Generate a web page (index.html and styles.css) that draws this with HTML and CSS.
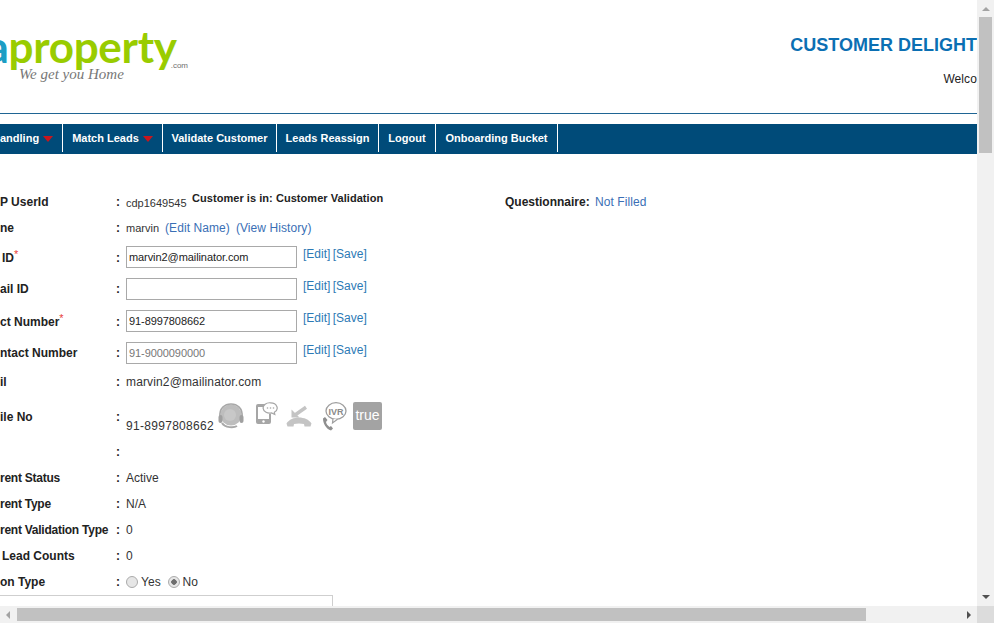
FILE: index.html
```html
<!DOCTYPE html>
<html lang="en">
<head>
<meta charset="utf-8">
<title>Customer Delight</title>
<link rel="stylesheet" href="styles.css">
</head>
<body>
<div class="window">
  <div class="main">
    <div class="viewport">
      <div class="page">
        <header class="header">
          <div class="logo">
            <div class="logo-word"><span class="logo-india">india</span><span class="logo-property">property</span><span class="logo-com">.com</span></div>
            <div class="logo-tag">We get you Home</div>
          </div>
          <div class="head-right">
            <div class="head-title">CUSTOMER DELIGHT</div>
            <div class="head-welcome">Welco</div>
          </div>
        </header>
        <div class="rule"></div>
        <nav class="nav">
          <a class="nav-item nav-first">andling<i class="caret"></i></a>
          <a class="nav-item nav-match">Match Leads<i class="caret"></i></a>
          <a class="nav-item nav-validate">Validate Customer</a>
          <a class="nav-item nav-reassign">Leads Reassign</a>
          <a class="nav-item nav-logout">Logout</a>
          <a class="nav-item nav-bucket">Onboarding Bucket</a>
        </nav>
        <section class="form">
          <div class="row r26">
            <div class="lbl">P UserId</div><div class="colon">:</div>
            <div class="val small"><span class="uid">cdp1649545</span><b class="state">Customer is in: Customer Validation</b><b class="q">Questionnaire:</b><a class="link">Not Filled</a></div>
          </div>
          <div class="row r26">
            <div class="lbl">ne</div><div class="colon">:</div>
            <div class="val"><span class="small">marvin</span><a class="link ml6">(Edit Name)</a><a class="link ml6">(View History)</a></div>
          </div>
          <div class="row r32 first-input">
            <div class="lbl ind2">ID<sup class="req">*</sup></div><div class="colon">:</div>
            <div class="val"><input class="field" type="text" value="marvin2@mailinator.com"><span class="acts"><a class="link2">[Edit]</a> <a class="link2">[Save]</a></span></div>
          </div>
          <div class="row r32 up1">
            <div class="lbl">ail ID</div><div class="colon">:</div>
            <div class="val"><input class="field" type="text"><span class="acts"><a class="link2">[Edit]</a> <a class="link2">[Save]</a></span></div>
          </div>
          <div class="row r32">
            <div class="lbl">ct Number<sup class="req">*</sup></div><div class="colon">:</div>
            <div class="val"><input class="field" type="text" value="91-8997808662"><span class="acts"><a class="link2">[Edit]</a> <a class="link2">[Save]</a></span></div>
          </div>
          <div class="row r32 up1">
            <div class="lbl">ntact Number</div><div class="colon">:</div>
            <div class="val"><input class="field" type="text" placeholder="91-9000090000"><span class="acts"><a class="link2">[Edit]</a> <a class="link2">[Save]</a></span></div>
          </div>
          <div class="row r24">
            <div class="lbl">il</div><div class="colon">:</div>
            <div class="val spaced">marvin2@mailinator.com</div>
          </div>
          <div class="row rmobile">
            <div class="lbl">ile No</div><div class="colon">:</div>
            <div class="val mobile">
              <span class="mob-num">91-8997808662</span>
              <svg class="ico ico-head" viewBox="0 0 26 26" width="26" height="26">
                <circle cx="13" cy="12" r="10.5" fill="#bdbdbd"/>
                <path d="M2 14C1 5 7 1 13 1s12 4 11 13" fill="none" stroke="#a8a8a8" stroke-width="1.6"/>
                <rect x="0.5" y="12" width="4" height="8" rx="2" fill="#a0a0a0"/>
                <rect x="21.5" y="12" width="4" height="8" rx="2" fill="#a0a0a0"/>
                <path d="M4 20c3 5 12 5 15 3" fill="none" stroke="#a8a8a8" stroke-width="2"/>
                <circle cx="12" cy="12" r="6" fill="#c8c8c8"/>
              </svg>
              <svg class="ico ico-sms" viewBox="0 0 23 24" width="23" height="24">
                <path d="M10 2H3a2 2 0 0 0-2 2v16a2 2 0 0 0 2 2h11a2 2 0 0 0 2-2V12h-2v5H3V5h7z" fill="#a6a6a6"/>
                <circle cx="8.500" cy="19.500" r="1.200" fill="#fff"/>
                <path d="M15.500 .8a6.500 5.200 0 0 1 3.800 9.500l.5 2.200-3.200-1.600a6.500 5.200 0 1 1-1.100-10.100z" fill="#fff" stroke="#a6a6a6" stroke-width="1.200"/>
                <circle cx="12.500" cy="6" r=".8" fill="#a6a6a6"/><circle cx="15.500" cy="6" r=".8" fill="#a6a6a6"/><circle cx="18.500" cy="6" r=".8" fill="#a6a6a6"/>
              </svg>
              <svg class="ico ico-miss" viewBox="0 0 26 22" width="26" height="22">
                <path d="M.5 18.500c5-8 20-8 25 0l-1 3h-6l-.5-2.500c-3-.7-7-.7-10 0l-.5 2.500h-6z" fill="#c4c4c4"/>
                <path d="M20 2.300L9 10" fill="none" stroke="#c4c4c4" stroke-width="3.500"/>
                <path d="M5.500 4.500v8h8z" fill="#c4c4c4"/>
              </svg>
              <svg class="ico ico-ivr" viewBox="0 0 27 30" width="27" height="30">
                <ellipse cx="14" cy="9" rx="10" ry="8.300" fill="#fff" stroke="#9e9e9e" stroke-width="1.300"/>
                <path d="M11 17l-.5 4 5-3.800" fill="#fff" stroke="#9e9e9e" stroke-width="1.200"/>
                <text class="ivr-text" x="14" y="12.500" text-anchor="middle">IVR</text>
                <path d="M3 15l2.500 3-1.500 2c.5 2 1.500 3.500 3.500 5l1.500-1 2 2.500-2 2c-5-1.500-8-7-8-12z" fill="#8f8f8f"/>
              </svg>
              <span class="true-badge">true</span>
            </div>
          </div>
          <div class="row r26">
            <div class="lbl"></div><div class="colon">:</div><div class="val"></div>
          </div>
          <div class="row r26">
            <div class="lbl tight">rent Status</div><div class="colon">:</div><div class="val">Active</div>
          </div>
          <div class="row r26">
            <div class="lbl tight">rent Type</div><div class="colon">:</div><div class="val">N/A</div>
          </div>
          <div class="row r26">
            <div class="lbl tight">rent Validation Type</div><div class="colon">:</div><div class="val">0</div>
          </div>
          <div class="row r26">
            <div class="lbl ind2">Lead Counts</div><div class="colon">:</div><div class="val">0</div>
          </div>
          <div class="row r26">
            <div class="lbl">on Type</div><div class="colon">:</div>
            <div class="val radios">
              <label class="radio-opt"><input type="radio" name="vt" disabled>Yes</label>
              <label class="radio-opt"><input type="radio" name="vt" checked disabled>No</label>
            </div>
          </div>
          <div class="box"></div>
        </section>
      </div>
    </div>
    <div class="bar-v">
      <span class="arr arr-up"></span>
      <span class="thumb-v"></span>
      <span class="arr arr-down"></span>
    </div>
  </div>
  <div class="bottom">
    <div class="bar-h">
      <span class="arr arr-left"></span>
      <span class="thumb-h"></span>
      <span class="arr arr-right"></span>
    </div>
    <div class="corner"></div>
  </div>
</div>
</body>
</html>
```
FILE: styles.css
```css
* { box-sizing: border-box; }
html, body { margin: 0; padding: 0; height: 100%; overflow: hidden; background: #fff; }
body { font: 12px "Liberation Sans", Arial, sans-serif; color: #222; }

.window { display: flex; flex-direction: column; width: 994px; height: 623px; }
.main { display: flex; height: 606px; }
.viewport { width: 977px; height: 606px; overflow: hidden; }
.page { width: 977px; }

.header { display: flex; justify-content: space-between; height: 113px; }
.logo { width: 188px; flex: none; padding-top: 24px; display: flex; flex-direction: column; align-items: flex-end; }
.logo-word { display: flex; align-items: baseline; white-space: nowrap; font-family: Lato, "Liberation Sans", sans-serif; font-weight: 700; font-size: 44px; line-height: 44px; letter-spacing: -0.3px; }
.logo-india { color: #1c9dc4; }
.logo-property { color: #99cc00; }
.logo-com { position: relative; top: 5px; color: #6f6f6f; font: 8px "Liberation Sans", sans-serif; letter-spacing: 0; margin-left: -6px; }
.logo-tag { align-self: flex-start; margin: -1px 0 0 19px; font: italic 15px/14px "Liberation Serif", serif; color: #777; white-space: nowrap; }
.head-right { text-align: right; white-space: nowrap; }
.head-title { margin-top: 35px; font-size: 18px; line-height: 21px; font-weight: 700; color: #0b6fb3; }
.head-welcome { margin-top: 16px; font-size: 12px; line-height: 14px; letter-spacing: .1px; color: #222; }

.rule { height: 1px; background: #1f6594; }
.nav { display: flex; height: 30px; margin-top: 10px; background: #004b79; }
.nav-item { height: 28px; font-size: 11px; font-weight: 700; color: #fff; border-right: 1px solid #fff; white-space: nowrap; display: flex; align-items: center; justify-content: center; }
.nav-first { width: 63px; justify-content: flex-start; }
.nav-match { width: 100px; }
.nav-validate { width: 114px; }
.nav-reassign { width: 102px; }
.nav-logout { width: 57px; }
.nav-bucket { width: 122px; }
.caret { width: 0; height: 0; margin: 2px 0 0 4px; border-left: 5.500px solid transparent; border-right: 5.500px solid transparent; border-top: 6px solid #c8161d; }

.form { padding-top: 35px; }
.row { display: grid; grid-template-columns: 116px 10px 1fr; align-items: center; }
.r26 { height: 26px; }
.r24 { height: 24px; }
.r32 { height: 32px; align-items: start; }
.first-input { margin-top: 1px; }
.lbl { font-weight: 700; color: #222; white-space: nowrap; }
.ind2 { padding-left: 2px; }
.tight { letter-spacing: -.25px; }
.r32 .lbl, .r32 .colon { line-height: 32px; }
.up1 .lbl, .up1 .colon { line-height: 30px; }
.colon { font-weight: 700; }
.val { display: flex; align-items: center; white-space: nowrap; color: #333; }
.small { font-size: 11px; }
.spaced { letter-spacing: .14px; }
.uid { width: 66px; flex: none; padding-top: 1px; }
.state { width: 313px; flex: none; margin-top: -9px; letter-spacing: .05px; color: #222; }
.q { width: 90px; flex: none; font-size: 12px; color: #222; }
.link { color: #3a6fb5; font-size: 12px; letter-spacing: .08px; }
.ml6 { margin-left: 6px; }
.req { color: #e8403a; font-size: 11px; font-weight: 400; line-height: 0; vertical-align: 4px; }
.field { width: 171px; height: 22px; margin: 4px 0 0; padding: 1px 2px; border: 1px solid #a9a9a9; font: 11px "Liberation Sans", sans-serif; letter-spacing: -.08px; color: #222; background: #fff; }
.field::placeholder { color: #777; opacity: 1; }
.acts { margin: 0 0 2px 6px; word-spacing: -1px; }
.link2 { color: #2c7ab5; }

.rmobile { height: 45px; align-items: start; }
.rmobile .lbl, .rmobile .colon { line-height: 14px; margin-top: 16px; }
.mobile { align-items: flex-start; height: 45px; }
.mob-num { margin-top: 25px; width: 92px; flex: none; font-size: 12px; letter-spacing: .3px; }
.ico { flex: none; display: block; }
.ico-head { margin-top: 9px; }
.ico-sms { margin: 8px 0 0 11px; }
.ico-miss { margin: 11px 0 0 8px; }
.ico-ivr { margin: 8px 0 0 10px; }
.ivr-text { font: 700 9px "Liberation Sans", sans-serif; fill: #8a8a8a; }
.true-badge { flex: none; width: 29px; height: 28px; margin: 8px 0 0 4px; border-radius: 2px; background: #a3a3a3; color: #fff; font-size: 14px; line-height: 27px; text-align: center; }

.radios { gap: 6.700px; }
.radio-opt { display: flex; align-items: center; letter-spacing: .1px; }
.radio-opt input { appearance: none; width: 12px; height: 12px; margin: 0 3px 0 0; border: 1px solid #ababab; border-radius: 50%; background: #e6e6e6; }
.radio-opt input:checked { background: radial-gradient(circle, #6e6e6e 0 2.500px, #e6e6e6 3px); }
.box { width: 334px; height: 60px; margin-left: -1px; border: 1px solid #cfcfcf; }

.bar-v { width: 17px; height: 606px; background: #f1f1f1; display: flex; flex-direction: column; align-items: center; }
.thumb-v { width: 13px; height: 136px; margin-top: 6px; background: #c1c1c1; }
.arr { width: 0; height: 0; display: block; border-style: solid; border-color: transparent; }
.arr-up { margin-top: 7px; border-width: 0 4px 4px; border-bottom-color: #a3a3a3; }
.arr-down { margin-top: 442px; border-width: 4px 4px 0; border-top-color: #505050; }
.bottom { display: flex; height: 17px; }
.bar-h { width: 977px; height: 17px; background: #f1f1f1; display: flex; align-items: center; }
.thumb-h { width: 849px; height: 13px; margin-left: 7px; background: #c1c1c1; }
.arr-left { margin-left: 6px; border-width: 4px 4px 4px 0; border-right-color: #a3a3a3; }
.arr-right { margin-left: 101px; border-width: 4px 0 4px 4px; border-left-color: #505050; }
.corner { width: 17px; height: 17px; background: #dcdcdc; }
```
